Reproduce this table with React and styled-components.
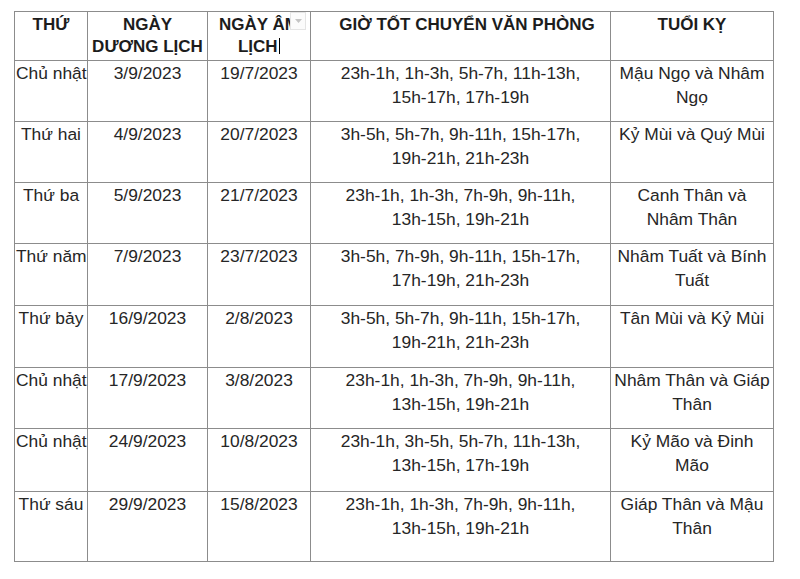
import React from 'react';
import styled, { createGlobalStyle } from 'styled-components';

const GlobalStyle = createGlobalStyle`
  body {
    margin: 0;
    background: #ffffff;
    font-family: "Liberation Sans", Arial, sans-serif;
  }
`;

const Page = styled.div`
  padding: 11px 0 0 14px;
`;

const Table = styled.table`
  border-collapse: collapse;
  table-layout: fixed;
  width: 759px;
  color: #262626;
`;

const Col = styled.col`
  width: ${(p) => p.$w}px;
`;

const HeadCell = styled.th`
  position: relative;
  border: 1px solid #8c8c8c;
  padding: 2px 1px 0 ${(p) => p.$indent || 1}px;
  vertical-align: top;
  text-align: center;
  font-size: 17px;
  font-weight: bold;
  line-height: 22px;
  color: #1c1c1c;
`;

const Row = styled.tr`
  height: ${(p) => p.$h}px;
`;

const Cell = styled.td`
  border: 1px solid #8c8c8c;
  padding: 0 1px;
  vertical-align: top;
  text-align: center;
  font-size: 17.4px;
  line-height: 24px;
  white-space: pre-line;
`;

const DayText = styled.span`
  white-space: nowrap;
`;

const FilterButton = styled.span`
  position: absolute;
  top: 0;
  left: 82px;
  width: 16px;
  height: 18px;
  background: #fbfbfb;
  border: 1px solid #e4e4e4;
  box-sizing: border-box;
  display: flex;
  align-items: center;
  justify-content: center;
`;

const Caret = styled.span`
  display: inline-block;
  width: 1.5px;
  height: 16px;
  background: #000;
  vertical-align: -2px;
  margin-left: 1px;
`;

const rows = [
  { day: 'Chủ nhật', solar: '3/9/2023', lunar: '19/7/2023', hours: '23h-1h, 1h-3h, 5h-7h, 11h-13h,\n15h-17h, 17h-19h', avoid: 'Mậu Ngọ và Nhâm\nNgọ', h: 61 },
  { day: 'Thứ hai', solar: '4/9/2023', lunar: '20/7/2023', hours: '3h-5h, 5h-7h, 9h-11h, 15h-17h,\n19h-21h, 21h-23h', avoid: 'Kỷ Mùi và Quý Mùi', h: 61 },
  { day: 'Thứ ba', solar: '5/9/2023', lunar: '21/7/2023', hours: '23h-1h, 1h-3h, 7h-9h, 9h-11h,\n13h-15h, 19h-21h', avoid: 'Canh Thân và\nNhâm Thân', h: 61 },
  { day: 'Thứ năm', solar: '7/9/2023', lunar: '23/7/2023', hours: '3h-5h, 7h-9h, 9h-11h, 15h-17h,\n17h-19h, 21h-23h', avoid: 'Nhâm Tuất và Bính\nTuất', h: 62 },
  { day: 'Thứ bảy', solar: '16/9/2023', lunar: '2/8/2023', hours: '3h-5h, 5h-7h, 9h-11h, 15h-17h,\n19h-21h, 21h-23h', avoid: 'Tân Mùi và Kỷ Mùi', h: 62 },
  { day: 'Chủ nhật', solar: '17/9/2023', lunar: '3/8/2023', hours: '23h-1h, 1h-3h, 7h-9h, 9h-11h,\n13h-15h, 19h-21h', avoid: 'Nhâm Thân và Giáp\nThân', h: 61 },
  { day: 'Chủ nhật', solar: '24/9/2023', lunar: '10/8/2023', hours: '23h-1h, 3h-5h, 5h-7h, 11h-13h,\n13h-15h, 17h-19h', avoid: 'Kỷ Mão và Đinh\nMão', h: 63 },
  { day: 'Thứ sáu', solar: '29/9/2023', lunar: '15/8/2023', hours: '23h-1h, 1h-3h, 7h-9h, 9h-11h,\n13h-15h, 19h-21h', avoid: 'Giáp Thân và Mậu\nThân', h: 70 },
];

const App = () => {
  return (
    <>
      <GlobalStyle />
      <Page>
        <Table>
          <colgroup>
            <Col $w={73} />
            <Col $w={120} />
            <Col $w={103} />
            <Col $w={300} />
            <Col $w={163} />
          </colgroup>
          <thead>
            <Row $h={49}>
              <HeadCell>THỨ</HeadCell>
              <HeadCell>NGÀY<br />DƯƠNG LỊCH</HeadCell>
              <HeadCell>
                NGÀY ÂM<br />LỊCH<Caret />
                <FilterButton>
                  <svg width="7" height="4" viewBox="0 0 7 4">
                    <path d="M0 0 L7 0 L3.5 4 Z" fill="#c4c4c4" />
                  </svg>
                </FilterButton>
              </HeadCell>
              <HeadCell $indent={14}>GIỜ TỐT CHUYỂN VĂN PHÒNG</HeadCell>
              <HeadCell>TUỔI KỴ</HeadCell>
            </Row>
          </thead>
          <tbody>
            {rows.map((r, i) => (
              <Row key={i} $h={r.h}>
                <Cell><DayText>{r.day}</DayText></Cell>
                <Cell>{r.solar}</Cell>
                <Cell>{r.lunar}</Cell>
                <Cell>{r.hours}</Cell>
                <Cell>{r.avoid}</Cell>
              </Row>
            ))}
          </tbody>
        </Table>
      </Page>
    </>
  );
};

export default App;
